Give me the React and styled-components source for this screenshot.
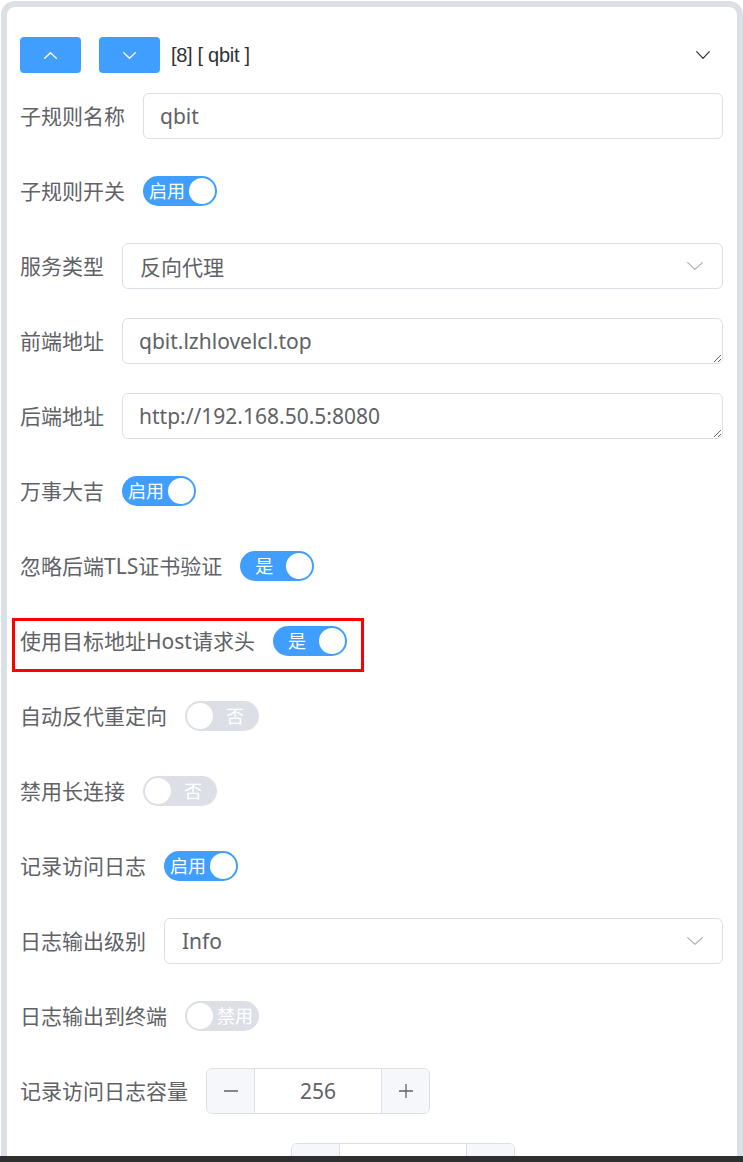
import React from "react";
import styled, { createGlobalStyle } from "styled-components";

const Global = createGlobalStyle`
  html, body { margin: 0; padding: 0; background: #fff; }
  body { font-family: "Noto Sans", "Noto Sans CJK SC", sans-serif; color: #606266; }
  * { box-sizing: border-box; }
`;

const Card = styled.div`
  margin: 1px 0 0 1px;
  width: 742px;
  border: 6px solid #dcdfe6;
  border-radius: 14px;
  background: #fff;
  padding: 30px 14px 40px 13px;
`;

const Header = styled.div`
  display: flex;
  align-items: center;
  height: 36px;
  margin-bottom: 20px;
`;

const MoveButton = styled.button`
  width: 61px;
  height: 36px;
  border: none;
  border-radius: 4px;
  background: #409eff;
  display: flex;
  align-items: center;
  justify-content: center;
  padding: 0;
  margin-right: ${(p) => p.$gap}px;
  cursor: pointer;
`;

const Title = styled.span`
  font-family: "Liberation Sans", Arial, sans-serif;
  font-size: 20px;
  color: #303133;
  letter-spacing: -0.3px;
`;

const Collapse = styled.span`
  margin-left: auto;
  margin-right: 13px;
  display: flex;
`;

const Form = styled.div`
  display: flex;
  flex-direction: column;
  gap: 29px;
`;

const Row = styled.div`
  position: relative;
  display: flex;
  align-items: center;
  height: 46px;
`;

const Label = styled.label`
  font-size: 21px;
  line-height: 30px;
  color: #606266;
  margin-right: 18px;
  white-space: nowrap;
  ${(p) => (p.$width ? `width: ${p.$width}px; height: 30px;` : "")}
`;

const TextInput = styled.input`
  flex: 1;
  height: 46px;
  border: 1px solid #dcdfe6;
  border-radius: 6px;
  padding: 0 16px;
  font-family: inherit;
  font-size: 21px;
  color: #606266;
  outline: none;
  background: #fff;
`;

const TextArea = styled.textarea`
  flex: 1;
  height: 46px;
  border: 1px solid #dcdfe6;
  border-radius: 6px;
  padding: 7px 16px 5px;
  font-family: inherit;
  font-size: 21px;
  line-height: 31px;
  color: #606266;
  outline: none;
  resize: vertical;
  overflow: hidden;
  background: #fff;
`;

const SelectBox = styled.div`
  flex: 1;
  height: 46px;
  border: 1px solid #dcdfe6;
  border-radius: 6px;
  padding: 0 19px 0 17px;
  display: flex;
  align-items: center;
  justify-content: space-between;
  font-size: 21px;
  color: #606266;
`;

const SwitchTrack = styled.div`
  width: 74px;
  height: 30px;
  border-radius: 15px;
  background: ${(p) => (p.$on ? "#409eff" : "#dcdfe6")};
  display: flex;
  flex-direction: ${(p) => (p.$on ? "row" : "row-reverse")};
  align-items: center;
  padding: 0 2px;
  flex: none;
`;

const SwitchText = styled.span`
  flex: 1;
  text-align: center;
  color: #fff;
  font-size: 18px;
  line-height: 1;
  white-space: nowrap;
`;

const Knob = styled.span`
  width: 26px;
  height: 26px;
  border-radius: 50%;
  background: #fff;
  flex: none;
`;

const NumberBox = styled.div`
  width: 224px;
  height: 46px;
  border: 1px solid #dcdfe6;
  border-radius: 6px;
  display: flex;
  overflow: hidden;
  flex: none;
`;

const StepButton = styled.span`
  width: 48px;
  background: #f5f7fa;
  display: flex;
  align-items: center;
  justify-content: center;
  color: #606266;
  ${(p) => (p.$side === "left" ? "border-right: 1px solid #dcdfe6;" : "border-left: 1px solid #dcdfe6;")}
`;

const NumberValue = styled.span`
  flex: 1;
  display: flex;
  align-items: center;
  justify-content: center;
  font-size: 21px;
  color: #606266;
`;

const Highlight = styled.div`
  position: absolute;
  left: -8px;
  top: 0;
  width: 352px;
  height: 54px;
  border: 3px solid #ff0000;
  pointer-events: none;
`;

const BottomBar = styled.div`
  position: fixed;
  left: 0;
  right: 0;
  bottom: 0;
  height: 6px;
  background: #2f2f2f;
`;

const Chevron = ({ up, color = "#fff", w = 13, h = 7, sw = 1.3 }) => (
  <svg width={w} height={h} viewBox={`0 0 ${w} ${h}`} fill="none">
    <polyline
      points={up ? `0.7,${h - 0.7} ${w / 2},0.7 ${w - 0.7},${h - 0.7}` : `0.7,0.7 ${w / 2},${h - 0.7} ${w - 0.7},0.7`}
      stroke={color}
      strokeWidth={sw}
      strokeLinecap="round"
      strokeLinejoin="round"
    />
  </svg>
);

const Switch = ({ on, text }) => (
  <SwitchTrack $on={on}>
    <SwitchText>{text}</SwitchText>
    <Knob />
  </SwitchTrack>
);

const Stepper = ({ value }) => (
  <NumberBox>
    <StepButton $side="left">
      <svg width="16" height="16" viewBox="0 0 16 16">
        <line x1="1" y1="8" x2="15" y2="8" stroke="#606266" strokeWidth="1.3" />
      </svg>
    </StepButton>
    <NumberValue>{value}</NumberValue>
    <StepButton $side="right">
      <svg width="16" height="16" viewBox="0 0 16 16">
        <line x1="1" y1="8" x2="15" y2="8" stroke="#606266" strokeWidth="1.3" />
        <line x1="8" y1="1" x2="8" y2="15" stroke="#606266" strokeWidth="1.3" />
      </svg>
    </StepButton>
  </NumberBox>
);

const Select = ({ value }) => (
  <SelectBox>
    <span>{value}</span>
    <Chevron color="#a8abb2" w={16} h={8} sw={1.1} />
  </SelectBox>
);

export default function App() {
  return (
    <>
      <Global />
      <Card>
        <Header>
          <MoveButton $gap={18}>
            <Chevron up />
          </MoveButton>
          <MoveButton $gap={11}>
            <Chevron />
          </MoveButton>
          <Title>[8] [ qbit ]</Title>
          <Collapse>
            <Chevron color="#303133" w={14} h={8} sw={1.2} />
          </Collapse>
        </Header>
        <Form>
          <Row>
            <Label>子规则名称</Label>
            <TextInput defaultValue="qbit" />
          </Row>
          <Row>
            <Label>子规则开关</Label>
            <Switch on text="启用" />
          </Row>
          <Row>
            <Label>服务类型</Label>
            <Select value="反向代理" />
          </Row>
          <Row>
            <Label>前端地址</Label>
            <TextArea rows={1} defaultValue="qbit.lzhlovelcl.top" />
          </Row>
          <Row>
            <Label>后端地址</Label>
            <TextArea rows={1} defaultValue="http://192.168.50.5:8080" />
          </Row>
          <Row>
            <Label>万事大吉</Label>
            <Switch on text="启用" />
          </Row>
          <Row>
            <Label>忽略后端TLS证书验证</Label>
            <Switch on text="是" />
          </Row>
          <Row>
            <Label>使用目标地址Host请求头</Label>
            <Switch on text="是" />
            <Highlight />
          </Row>
          <Row>
            <Label>自动反代重定向</Label>
            <Switch text="否" />
          </Row>
          <Row>
            <Label>禁用长连接</Label>
            <Switch text="否" />
          </Row>
          <Row>
            <Label>记录访问日志</Label>
            <Switch on text="启用" />
          </Row>
          <Row>
            <Label>日志输出级别</Label>
            <Select value="Info" />
          </Row>
          <Row>
            <Label>日志输出到终端</Label>
            <Switch text="禁用" />
          </Row>
          <Row>
            <Label>记录访问日志容量</Label>
            <Stepper value="256" />
          </Row>
          <Row>
            <Label $width={253} />
            <Stepper value="" />
          </Row>
        </Form>
      </Card>
      <BottomBar />
    </>
  );
}
